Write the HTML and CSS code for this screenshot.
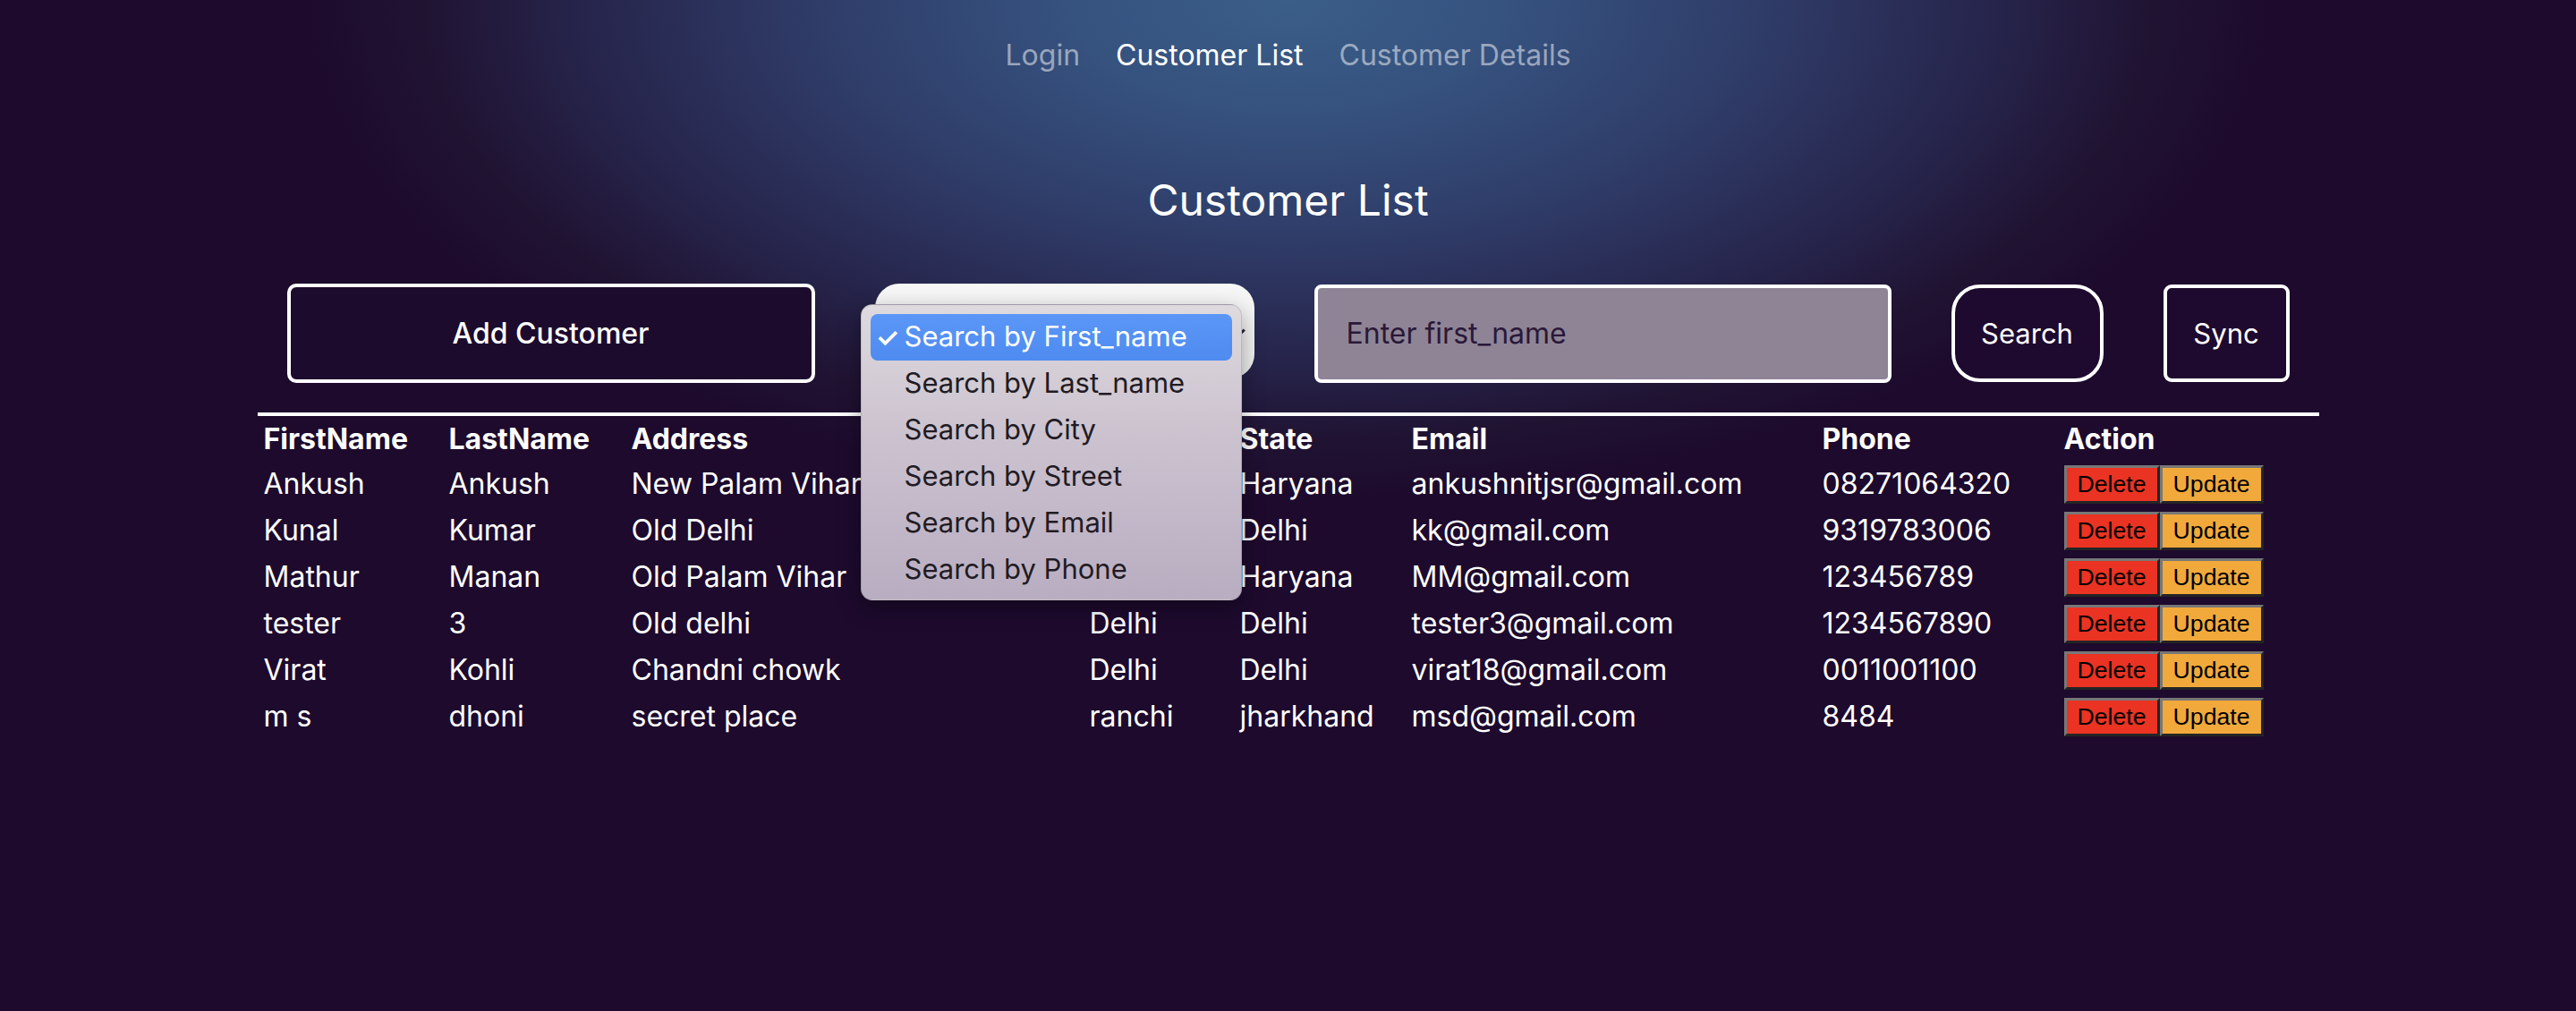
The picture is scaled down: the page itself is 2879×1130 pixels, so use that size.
FILE: index.html
```html
<!DOCTYPE html>
<html lang="en">
<head>
<meta charset="utf-8">
<title>Customer List</title>
<link rel="stylesheet" href="styles.css">
</head>
<body>
<nav class="nav">
  <a class="nav-link">Login</a>
  <a class="nav-link active">Customer List</a>
  <a class="nav-link">Customer Details</a>
</nav>
<h1 class="title">Customer List</h1>
<div class="controls">
  <button class="btn-add">Add Customer</button>
  <div class="select-wrap">
    <div class="select-box"><span class="chev"></span></div>
    <ul class="menu">
      <li class="menu-item selected"><span class="check">✓</span>Search by First_name</li>
      <li class="menu-item">Search by Last_name</li>
      <li class="menu-item">Search by City</li>
      <li class="menu-item">Search by Street</li>
      <li class="menu-item">Search by Email</li>
      <li class="menu-item">Search by Phone</li>
    </ul>
  </div>
  <input class="search-input" type="text" placeholder="Enter first_name">
  <button class="btn-search">Search</button>
  <button class="btn-sync">Sync</button>
</div>
<div class="table-wrap">
  <table class="customers">
    <colgroup>
      <col class="c-first"><col class="c-last"><col class="c-addr"><col class="c-city"><col class="c-state"><col class="c-email"><col class="c-phone"><col class="c-action">
    </colgroup>
    <thead>
      <tr><th>FirstName</th><th>LastName</th><th>Address</th><th>City</th><th>State</th><th>Email</th><th>Phone</th><th>Action</th></tr>
    </thead>
    <tbody>
      <tr><td>Ankush</td><td>Ankush</td><td>New Palam Vihar</td><td>Gurgaon</td><td>Haryana</td><td>ankushnitjsr@gmail.com</td><td>08271064320</td><td><div class="actions"><button class="btn-del">Delete</button><button class="btn-upd">Update</button></div></td></tr>
      <tr><td>Kunal</td><td>Kumar</td><td>Old Delhi</td><td>Delhi</td><td>Delhi</td><td>kk@gmail.com</td><td>9319783006</td><td><div class="actions"><button class="btn-del">Delete</button><button class="btn-upd">Update</button></div></td></tr>
      <tr><td>Mathur</td><td>Manan</td><td>Old Palam Vihar</td><td>Gurgaon</td><td>Haryana</td><td>MM@gmail.com</td><td>123456789</td><td><div class="actions"><button class="btn-del">Delete</button><button class="btn-upd">Update</button></div></td></tr>
      <tr><td>tester</td><td>3</td><td>Old delhi</td><td>Delhi</td><td>Delhi</td><td>tester3@gmail.com</td><td>1234567890</td><td><div class="actions"><button class="btn-del">Delete</button><button class="btn-upd">Update</button></div></td></tr>
      <tr><td>Virat</td><td>Kohli</td><td>Chandni chowk</td><td>Delhi</td><td>Delhi</td><td>virat18@gmail.com</td><td>0011001100</td><td><div class="actions"><button class="btn-del">Delete</button><button class="btn-upd">Update</button></div></td></tr>
      <tr><td>m s</td><td>dhoni</td><td>secret place</td><td>ranchi</td><td>jharkhand</td><td>msd@gmail.com</td><td>8484</td><td><div class="actions"><button class="btn-del">Delete</button><button class="btn-upd">Update</button></div></td></tr>
    </tbody>
  </table>
</div>
</body>
</html>
```

FILE: styles.css
```css
* { box-sizing: border-box; }

html, body {
  margin: 0;
  padding: 0;
  min-height: 100%;
}

body {
  min-height: 1130px;
  font-family: Inter, "Noto Sans", sans-serif;
  color: #ffffff;
  background-color: #1d0a2d;
  background-image: radial-gradient(ellipse 1100px 560px at 50% 0%, #3a5e88 0%, #36527f 22%, #2f3c68 48%, #26244b 72%, #201332 88%, #1d0a2d 100%);
  background-repeat: no-repeat;
}

.nav {
  padding-top: 38px;
  display: flex;
  justify-content: center;
  gap: 40px;
  font-size: 32px;
  line-height: 48px;
}

.nav-link {
  color: rgba(255, 255, 255, 0.5);
  text-decoration: none;
}

.nav-link.active {
  color: #ffffff;
}

.title {
  margin: 102px 0 0;
  font-size: 48px;
  line-height: 72px;
  font-weight: 400;
  text-align: center;
}

.controls {
  margin-top: 57px;
  display: flex;
  justify-content: center;
  align-items: center;
  gap: 67px;
}

.btn-add {
  width: 590px;
  height: 111px;
  background: #1d0b2e;
  border: 4px solid #ffffff;
  border-radius: 10px;
  color: #ffffff;
  font-family: Inter, sans-serif;
  font-size: 32px;
  font-weight: 500;
}

.select-wrap {
  position: relative;
  width: 424px;
  height: 106px;
  margin-top: -5px;
}

.select-box {
  width: 100%;
  height: 100%;
  border-radius: 27px;
  background: linear-gradient(#f7f7f7, #ececec);
  position: relative;
}

.chev {
  position: absolute;
  right: 12px;
  top: 48px;
  width: 9px;
  height: 9px;
  border-right: 3px solid #2a2030;
  border-bottom: 3px solid #2a2030;
  transform: rotate(45deg);
}

.menu {
  position: absolute;
  left: -16px;
  top: 23px;
  width: 426px;
  height: 331px;
  margin: 0;
  padding: 10px 10px;
  list-style: none;
  border-radius: 13px;
  background: linear-gradient(#dedade 0%, #cdc4d0 40%, #b9adc1 100%);
  border: 1px solid rgba(0, 0, 0, 0.12);
  box-shadow: 0 8px 24px rgba(0, 0, 0, 0.35);
  font-family: Inter, sans-serif;
  font-size: 31px;
  color: #211b24;
  z-index: 5;
}

.menu-item {
  position: relative;
  height: 52px;
  line-height: 50px;
  padding-left: 38px;
  border-radius: 8px;
  white-space: nowrap;
}

.menu-item.selected {
  background: linear-gradient(#5a97f7, #4f8bf0);
  color: #ffffff;
}

.check {
  position: absolute;
  left: 6px;
  top: 1px;
  font-size: 30px;
  font-weight: 600;
}

.search-input {
  width: 645px;
  height: 110px;
  background: #8e8496;
  border: 4px solid #ffffff;
  border-radius: 8px;
  padding: 0 32px;
  font-family: Inter, sans-serif;
  font-size: 32px;
  color: #2a1838;
  outline: none;
}

.search-input::placeholder {
  color: #2a1838;
}

.btn-search,
.btn-sync {
  height: 109px;
  background: #1e0a2e;
  border: 4px solid #ffffff;
  color: #ffffff;
  font-family: Inter, sans-serif;
  font-size: 31px;
}

.btn-search {
  width: 170px;
  border-radius: 32px;
}

.btn-sync {
  width: 141px;
  border-radius: 9px;
}

.table-wrap {
  width: 2304px;
  margin: 33px auto 0;
  border-top: 4px solid #ffffff;
}

.customers {
  width: 100%;
  table-layout: fixed;
  border-collapse: collapse;
  font-size: 32px;
  line-height: 48px;
}

.c-first { width: 207px; }
.c-last { width: 204px; }
.c-addr { width: 512px; }
.c-city { width: 168px; }
.c-state { width: 192px; }
.c-email { width: 459px; }
.c-phone { width: 270px; }
.c-action { width: 292px; }

.customers th,
.customers td {
  padding: 2px 0 2px 7px;
  text-align: left;
  white-space: nowrap;
  overflow: hidden;
  vertical-align: middle;
}

.customers th {
  font-weight: 700;
  padding-bottom: 0;
}

.actions {
  display: flex;
}

.btn-del,
.btn-upd {
  font-family: "Liberation Sans", Arial, sans-serif;
  font-size: 26.67px;
  line-height: 31px;
  padding: 3px 12px;
  border-width: 3px;
  border-style: solid;
  border-color: #777777 #242424 #242424 #777777;
  color: #000000;
  border-radius: 0;
}

.btn-del { background: #ea3323; }
.btn-upd { background: #f2a93b; }
```
